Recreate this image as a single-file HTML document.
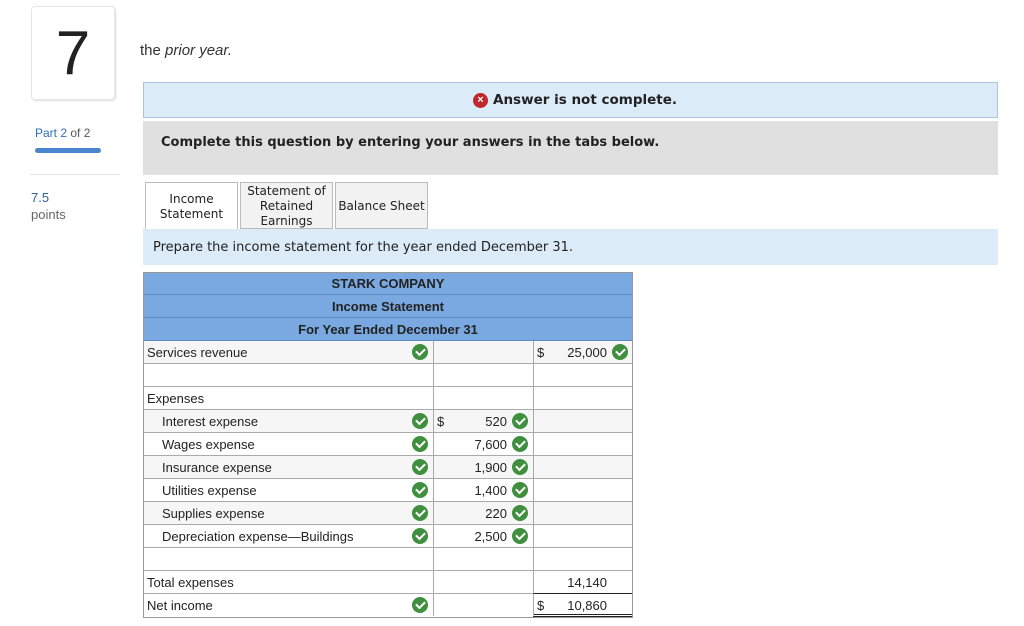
<!DOCTYPE html>
<html><head><style>
*{margin:0;padding:0;box-sizing:border-box}
body{width:1024px;height:626px;background:#fff;font-family:"Liberation Sans",sans-serif;position:relative;overflow:hidden;color:#222}
.a{position:absolute}
.dv{font-family:"DejaVu Sans",sans-serif}
.row{position:absolute;left:143px;width:490px;height:23px;border-bottom:1px solid #aaa;background:#fff;font-size:13px}
.row .l{position:absolute;left:4px;top:4px}
.row .l.i{left:19px}
.c1{position:absolute;left:290px;top:0;width:100px;height:22px;border-left:1px solid #aaa}
.c2{position:absolute;left:390px;top:0;width:100px;height:22px;border-left:1px solid #aaa}
.ck{position:absolute;width:16px;height:16px;border-radius:50%;background:#3f8f3f;top:3px}
.ck:after{content:"";position:absolute;left:4px;top:4px;width:7px;height:4px;border-left:2px solid #fff;border-bottom:2px solid #fff;transform:rotate(-45deg)}
.n{position:absolute;top:4px;text-align:right}
.hd{position:absolute;left:143px;width:490px;height:23px;background:#79a9e0;border-bottom:1px solid #5d8cc4;font-weight:bold;font-size:13px;text-align:center;line-height:23px;color:#222}
</style></head><body>
<div class="a" style="left:31px;top:6px;width:84px;height:94px;border:1px solid #e6e6e6;border-radius:4px;box-shadow:1px 1px 2px #ddd;font-size:62px;text-align:center;line-height:94px;color:#222">7</div>
<div class="a" style="left:140px;top:42px;font-size:15px;color:#333">the <i>prior year.</i></div>
<div class="a" style="left:35px;top:126px;font-size:12px;color:#2e6eb8">Part 2 <span style="color:#555">of 2</span></div>
<div class="a" style="left:35px;top:148px;width:66px;height:5px;border-radius:3px;background:#4a86cf"></div>
<div class="a" style="left:30px;top:174px;width:90px;height:1px;background:#e5e5e5"></div>
<div class="a" style="left:31px;top:190px;font-size:13px;color:#2e5f99">7.5</div>
<div class="a" style="left:31px;top:207px;font-size:13px;color:#666">points</div>
<div class="a" style="left:143px;top:82px;width:855px;height:36px;background:#dcebf8;border:1px solid #a9c4dc"></div>
<div class="a" style="left:473px;top:93px;width:15px;height:15px;border-radius:50%;background:#c0282d;color:#fff;font-size:11px;text-align:center;line-height:15px;font-weight:bold">×</div>
<div class="a dv" style="left:493px;top:92px;font-size:13.5px;font-weight:bold;color:#222">Answer is not complete.</div>
<div class="a" style="left:143px;top:121px;width:855px;height:54px;background:#e0e0e0"></div>
<div class="a dv" style="left:161px;top:135px;font-size:13px;font-weight:bold">Complete this question by entering your answers in the tabs below.</div>
<div class="a dv" style="left:145px;top:182px;width:93px;height:48px;border:1px solid #bbb;border-bottom:none;background:#fff;font-size:12px;text-align:center;padding-top:9px;line-height:15px">Income<br>Statement</div>
<div class="a dv" style="left:240px;top:182px;width:93px;height:47px;border:1px solid #bbb;background:#f2f2f2;font-size:12px;text-align:center;padding-top:1px;line-height:15px">Statement of<br>Retained<br>Earnings</div>
<div class="a dv" style="left:335px;top:182px;width:93px;height:47px;border:1px solid #bbb;background:#f2f2f2;font-size:12px;text-align:center;line-height:46px">Balance Sheet</div>
<div class="a" style="left:143px;top:229px;width:855px;height:36px;background:#dcebf8"></div>
<div class="a dv" style="left:153px;top:240px;font-size:13px">Prepare the income statement for the year ended December 31.</div>
<div class="hd" style="top:272px">STARK COMPANY</div>
<div class="hd" style="top:295px">Income Statement</div>
<div class="hd" style="top:318px">For Year Ended December 31</div>

<div class="row" style="top:341px;background:#f6f6f6"><span class="l">Services revenue</span><div class="ck" style="left:269px"></div><div class="c1"></div><div class="c2"><span class="n" style="left:3px">$</span><span class="n" style="right:26px">25,000</span><div class="ck" style="left:78px"></div></div></div>
<div class="row" style="top:364px"><div class="c1"></div><div class="c2"></div></div>
<div class="row" style="top:387px"><span class="l">Expenses</span><div class="c1"></div><div class="c2"></div></div>
<div class="row" style="top:410px;background:#f6f6f6"><span class="l i">Interest expense</span><div class="ck" style="left:269px"></div><div class="c1"><span class="n" style="left:3px">$</span><span class="n" style="right:26px">520</span><div class="ck" style="left:78px"></div></div><div class="c2"></div></div>
<div class="row" style="top:433px"><span class="l i">Wages expense</span><div class="ck" style="left:269px"></div><div class="c1"><span class="n" style="right:26px">7,600</span><div class="ck" style="left:78px"></div></div><div class="c2"></div></div>
<div class="row" style="top:456px;background:#f6f6f6"><span class="l i">Insurance expense</span><div class="ck" style="left:269px"></div><div class="c1"><span class="n" style="right:26px">1,900</span><div class="ck" style="left:78px"></div></div><div class="c2"></div></div>
<div class="row" style="top:479px"><span class="l i">Utilities expense</span><div class="ck" style="left:269px"></div><div class="c1"><span class="n" style="right:26px">1,400</span><div class="ck" style="left:78px"></div></div><div class="c2"></div></div>
<div class="row" style="top:502px;background:#f6f6f6"><span class="l i">Supplies expense</span><div class="ck" style="left:269px"></div><div class="c1"><span class="n" style="right:26px">220</span><div class="ck" style="left:78px"></div></div><div class="c2"></div></div>
<div class="row" style="top:525px"><span class="l i">Depreciation expense—Buildings</span><div class="ck" style="left:269px"></div><div class="c1"><span class="n" style="right:26px">2,500</span><div class="ck" style="left:78px"></div></div><div class="c2"></div></div>
<div class="row" style="top:548px"><div class="c1"></div><div class="c2"></div></div>
<div class="row" style="top:571px"><span class="l">Total expenses</span><div class="c1"></div><div class="c2" style="border-bottom:1px solid #222;height:23px"><span class="n" style="right:26px">14,140</span></div></div>
<div class="row" style="top:594px;border-bottom:none"><span class="l">Net income</span><div class="ck" style="left:269px"></div><div class="c1"></div><div class="c2" style="border-bottom:3px double #222;height:23px"><span class="n" style="left:3px">$</span><span class="n" style="right:26px">10,860</span></div></div>
<div class="a" style="left:143px;top:272px;width:490px;height:346px;border:1px solid #999;z-index:5"></div>
</body></html>
